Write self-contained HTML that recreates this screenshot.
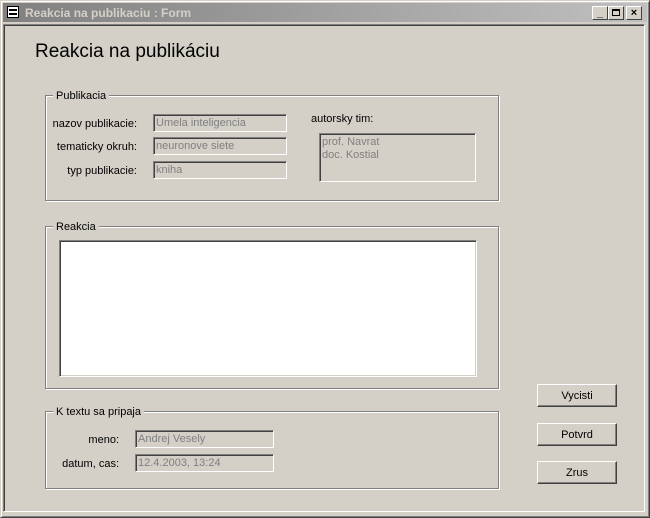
<!DOCTYPE html>
<html><head><meta charset="utf-8"><style>
body{margin:0;width:650px;height:518px;overflow:hidden;background:#d4d0c8;font-family:"Liberation Sans",sans-serif;font-size:11px;position:relative}
.a{position:absolute}
.frame{left:0;top:0;width:648px;height:516px;border-top:1px solid #d4d0c8;border-left:1px solid #d4d0c8;border-right:1px solid #404040;border-bottom:1px solid #404040;box-shadow:inset 1px 1px 0 #fff,inset -1px -1px 0 #808080}
.title{left:3px;top:3px;width:644px;height:19px;background:linear-gradient(90deg,#808080,#c0c0c0);color:#d4d0c8;font-weight:bold;font-size:12px;line-height:20px}
.client{left:3px;top:24px;width:640px;height:486px;border-top:1px solid #808080;border-left:1px solid #808080;border-right:1px solid #fff;border-bottom:1px solid #fff;box-shadow:inset 1px 1px 0 #404040,inset -1px -1px 0 #d4d0c8}
.grp{border:1px solid #808080;box-shadow:1px 1px 0 #fff,inset 1px 1px 0 #fff}
.lg{background:#d4d0c8;padding:0 3px;top:-6px;left:7px;color:#000}
.fld{border-top:1px solid #808080;border-left:1px solid #808080;border-right:1px solid #fff;border-bottom:1px solid #fff;box-shadow:inset 1px 1px 0 #404040,inset -1px -1px 0 #d4d0c8;color:#808080;padding:2px 0 0 2px;box-sizing:border-box;line-height:13px}
.lbl{text-align:right;color:#000}
.btn{width:80px;height:23px;box-sizing:border-box;border-top:1px solid #fff;border-left:1px solid #fff;border-right:1px solid #404040;border-bottom:1px solid #404040;box-shadow:inset -1px -1px 0 #808080;text-align:center;line-height:23px;color:#000}
.wb{top:3px;width:16px;height:14px;box-sizing:border-box;background:#d4d0c8;border-top:1px solid #fff;border-left:1px solid #fff;border-right:1px solid #404040;border-bottom:1px solid #404040;color:#000;font-size:11px;line-height:12px;text-align:center;font-weight:bold}
</style></head><body>
<div class="a frame"></div>
<div class="a title"><div class="a" style="left:4px;top:3px;width:12px;height:12px;background:#fff;border:1px solid #000;box-sizing:border-box"><div class="a" style="left:1px;top:2px;width:8px;height:2px;background:#000"></div><div class="a" style="left:1px;top:6px;width:8px;height:2px;background:#000"></div></div><span class="a" style="left:22px;top:0">Reakcia na publikaciu : Form</span>
<div class="a wb" style="left:589px">_</div><div class="a wb" style="left:605px"><div class="a" style="left:3px;top:2px;width:8px;height:7px;border:1px solid #000;border-top-width:2px;box-sizing:border-box"></div></div><div class="a wb" style="left:623px">×</div></div>
<div class="a client"></div>
<div class="a" style="left:35px;top:41px;font-size:19px">Reakcia na publikáciu</div>

<div class="a grp" style="left:45px;top:95px;width:452px;height:104px"><span class="a lg">Publikacia</span></div>
<div class="a lbl" style="left:40px;top:118px;width:97px">nazov publikacie:</div>
<div class="a lbl" style="left:40px;top:141px;width:97px">tematicky okruh:</div>
<div class="a lbl" style="left:40px;top:165px;width:97px">typ publikacie:</div>
<div class="a fld" style="left:153px;top:114px;width:134px;height:18px">Umela inteligencia</div>
<div class="a fld" style="left:153px;top:137px;width:134px;height:18px">neuronove siete</div>
<div class="a fld" style="left:153px;top:161px;width:134px;height:18px">kniha</div>
<div class="a" style="left:311px;top:113px">autorsky tim:</div>
<div class="a fld" style="left:319px;top:133px;width:157px;height:49px">prof. Navrat<br>doc. Kostial</div>

<div class="a grp" style="left:45px;top:226px;width:452px;height:161px"><span class="a lg">Reakcia</span></div>
<div class="a fld" style="left:59px;top:240px;width:418px;height:137px;background:#fff"></div>

<div class="a grp" style="left:45px;top:411px;width:452px;height:76px"><span class="a lg">K textu sa pripaja</span></div>
<div class="a lbl" style="left:40px;top:434px;width:79px">meno:</div>
<div class="a lbl" style="left:40px;top:458px;width:79px">datum, cas:</div>
<div class="a fld" style="left:135px;top:430px;width:139px;height:18px">Andrej Vesely</div>
<div class="a fld" style="left:135px;top:454px;width:139px;height:18px">12.4.2003, 13:24</div>

<div class="a btn" style="left:537px;top:384px">Vycisti</div>
<div class="a btn" style="left:537px;top:423px">Potvrd</div>
<div class="a btn" style="left:537px;top:461px">Zrus</div>
</body></html>
